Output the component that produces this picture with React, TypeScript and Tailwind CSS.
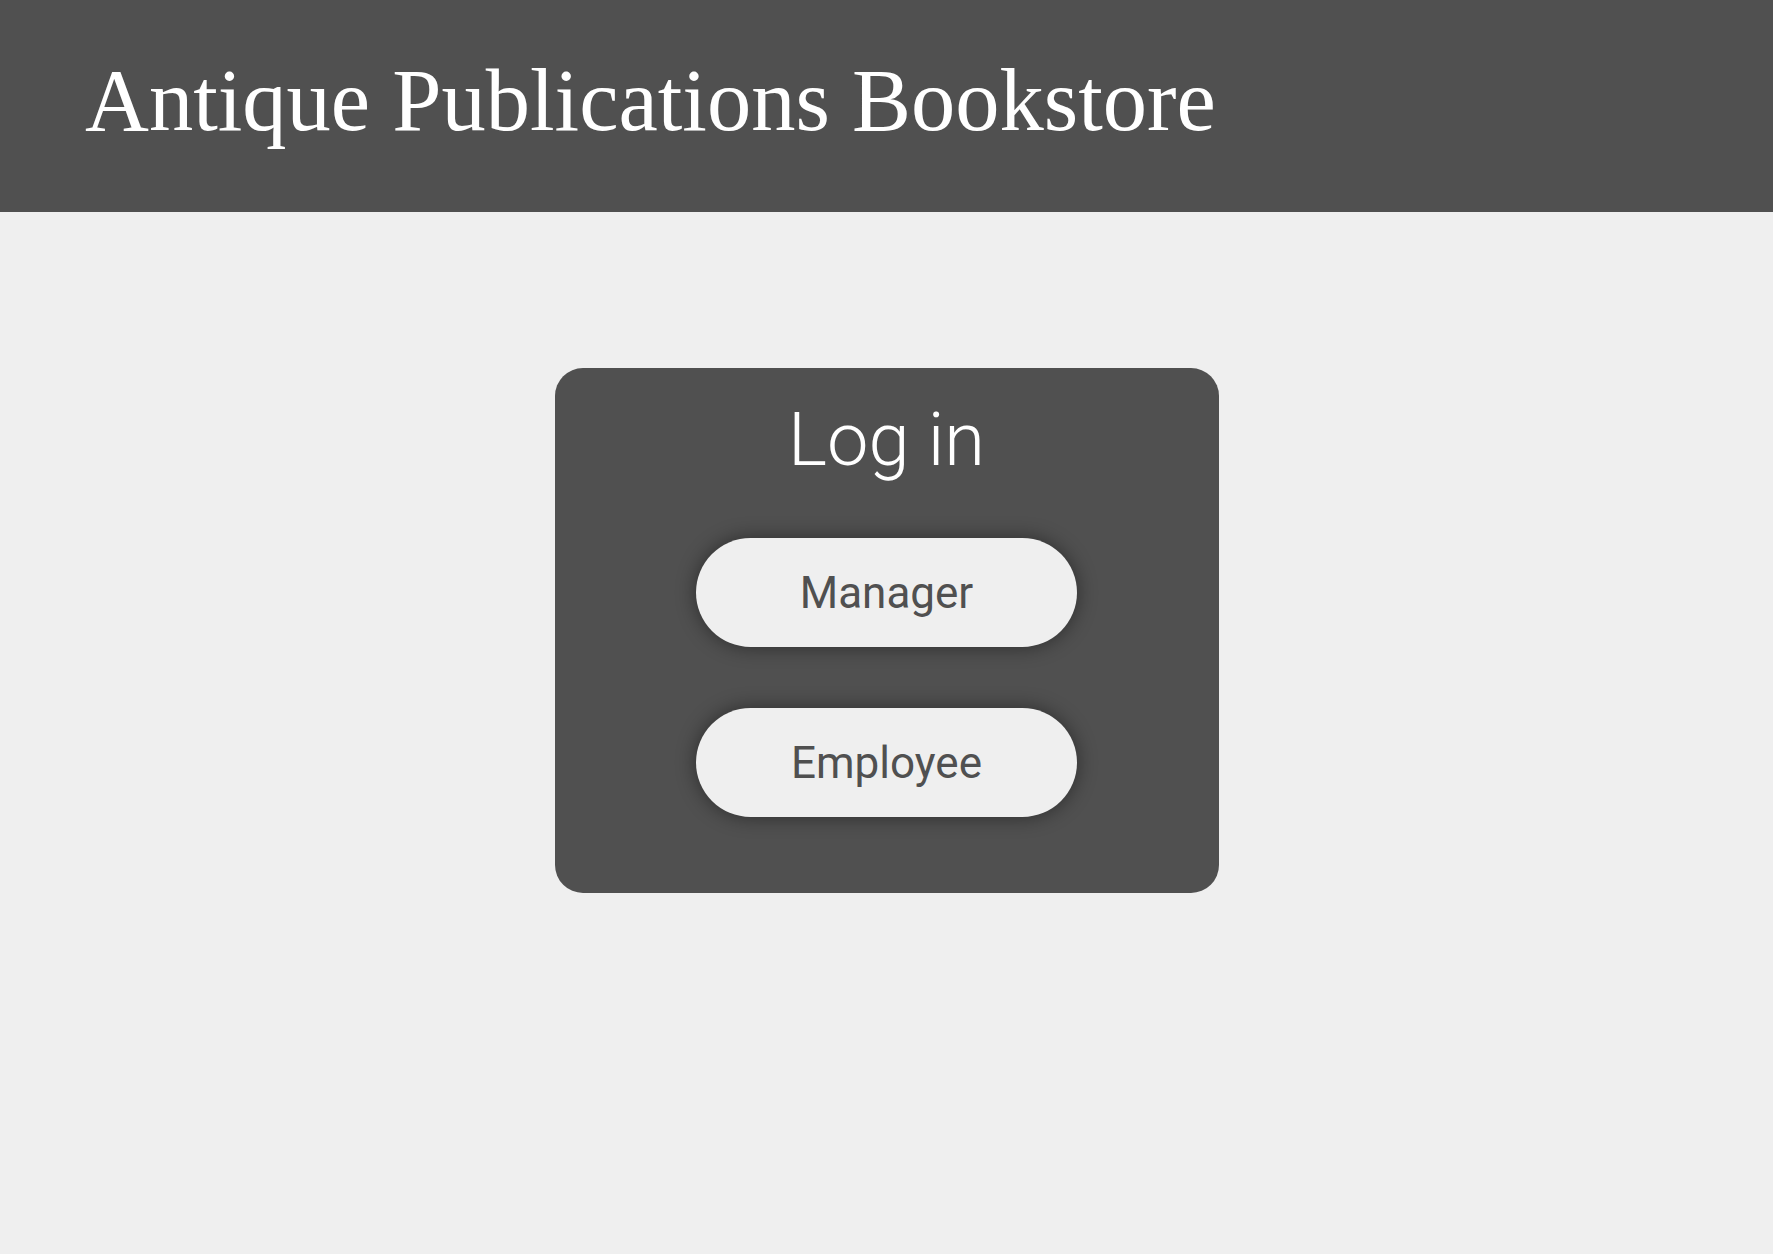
import React from "react";

const RoleButton: React.FC<{ label: string }> = ({ label }) => {
    return (
        <button className="flex h-[109px] w-[381px] items-center justify-center rounded-full bg-[#efefef] text-[44px] text-[#505050] shadow-[0_0_20px_rgba(0,0,0,0.45)] font-['Roboto',sans-serif]">
            {label}
        </button>
    );
};

const App: React.FC = () => {
    return (
        <div className="min-h-[1254px] w-full bg-[#efefef]">
            <header className="h-[212px] w-full bg-[#505050] pl-[85px] pt-[34px]">
                <h1 className="text-[88.5px] leading-normal text-white font-['Liberation_Serif','Times_New_Roman',serif]">
                    Antique Publications Bookstore
                </h1>
            </header>

            <main className="flex justify-center pt-[156px]">
                <div className="flex w-[664px] flex-col items-center rounded-[28px] bg-[#505050] pt-[16px] pb-[76px]">
                    <h2 className="text-[74px] font-light leading-normal text-white font-['Roboto',sans-serif]">Log in</h2>
                    <div className="mt-[43px] flex flex-col items-center gap-[61px]">
                        <RoleButton label="Manager" />
                        <RoleButton label="Employee" />
                    </div>
                </div>
            </main>
        </div>
    );
};

export default App;
